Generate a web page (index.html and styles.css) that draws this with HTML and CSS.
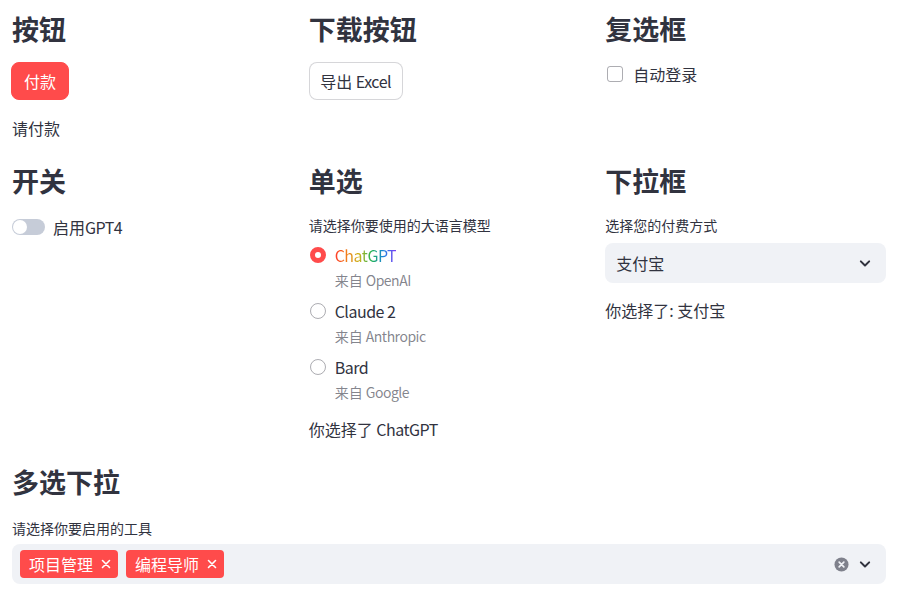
FILE: index.html
```html
<!DOCTYPE html>
<html lang="zh">
<head>
<meta charset="utf-8">
<link rel="stylesheet" href="styles.css">
</head>
<body>
<main class="page">
  <section class="cols row1">
    <div class="col">
      <h3 class="hd">按钮</h3>
      <button class="btn btn-primary">付款</button>
      <p class="txt after-btn">请付款</p>
    </div>
    <div class="col">
      <h3 class="hd">下载按钮</h3>
      <button class="btn btn-secondary">导出 <span class="en">Excel</span></button>
    </div>
    <div class="col">
      <h3 class="hd">复选框</h3>
      <label class="check"><span class="box"></span><span>自动登录</span></label>
    </div>
  </section>

  <section class="cols row2">
    <div class="col">
      <h3 class="hd">开关</h3>
      <label class="toggle"><span class="track"><span class="knob"></span></span><span>启用<span class="en">GPT4</span></span></label>
    </div>
    <div class="col">
      <h3 class="hd">单选</h3>
      <div class="label">请选择你要使用的大语言模型</div>
      <div class="radios">
        <div class="opt">
          <div class="opt-line"><span class="radio on"></span><span class="rainbow en">ChatGPT</span></div>
          <div class="caption">来自 <span class="en">OpenAI</span></div>
        </div>
        <div class="opt">
          <div class="opt-line"><span class="radio"></span><span class="en">Claude 2</span></div>
          <div class="caption">来自 <span class="en">Anthropic</span></div>
        </div>
        <div class="opt">
          <div class="opt-line"><span class="radio"></span><span class="en">Bard</span></div>
          <div class="caption">来自 <span class="en">Google</span></div>
        </div>
      </div>
      <p class="txt result">你选择了 <span class="en">ChatGPT</span></p>
    </div>
    <div class="col">
      <h3 class="hd">下拉框</h3>
      <div class="label">选择您的付费方式</div>
      <div class="select">
        <span>支付宝</span>
        <svg class="chev" viewBox="0 0 24 24" width="20" height="20"><path d="M7 10l5 5 5-5" fill="none" stroke="#31333F" stroke-width="2.4" stroke-linecap="round" stroke-linejoin="round"/></svg>
      </div>
      <p class="txt sel-result">你选择了: 支付宝</p>
    </div>
  </section>

  <section class="multi">
    <h3 class="hd">多选下拉</h3>
    <div class="label">请选择你要启用的工具</div>
    <div class="mselect">
      <div class="tags">
        <span class="tag">项目管理<svg class="x" viewBox="0 0 10 10" width="10" height="10"><path d="M1.5 1.5l7 7M8.5 1.5l-7 7" stroke="#fff" stroke-width="1.6" stroke-linecap="round"/></svg></span>
        <span class="tag">编程导师<svg class="x" viewBox="0 0 10 10" width="10" height="10"><path d="M1.5 1.5l7 7M8.5 1.5l-7 7" stroke="#fff" stroke-width="1.6" stroke-linecap="round"/></svg></span>
      </div>
      <div class="icons">
        <svg viewBox="0 0 16 16" width="15" height="15"><circle cx="8" cy="8" r="7.5" fill="#7f818c"/><path d="M5.5 5.5l5 5M10.5 5.5l-5 5" stroke="#f0f2f6" stroke-width="1.8" stroke-linecap="round"/></svg>
        <svg class="chev" viewBox="0 0 24 24" width="20" height="20"><path d="M7 10l5 5 5-5" fill="none" stroke="#31333F" stroke-width="2.4" stroke-linecap="round" stroke-linejoin="round"/></svg>
      </div>
    </div>
  </section>
</main>
</body>
</html>
```

FILE: styles.css
```css
* { box-sizing: border-box; }
html, body { margin: 0; padding: 0; background: #fff; }
body {
  font-family: "Noto Sans CJK SC", "Noto Sans", sans-serif;
  color: #31333F;
  font-size: 16px;
  line-height: 24px;
}
.page { padding: 0 16px 0 12px; }
.en { letter-spacing: -0.5px; }
.cols {
  display: grid;
  grid-template-columns: repeat(3, 1fr);
  column-gap: 16px;
}
.col { display: flex; flex-direction: column; align-items: flex-start; }
.hd {
  margin: 0;
  font-size: 27px;
  line-height: 34px;
  font-weight: 700;
}
.row1 { padding-top: 12px; }
.row1 .hd { margin-bottom: 16px; }
.txt { margin: 0; }
.after-btn { margin-top: 16px; }

.btn {
  font-family: inherit;
  font-size: 16px;
  line-height: 24px;
  height: 38px;
  border-radius: 8px;
  padding: 0;
  white-space: nowrap;
  cursor: pointer;
}
.btn-primary {
  background: #FF4B4B;
  color: #fff;
  border: 1px solid #FF4B4B;
  width: 58px;
  margin-left: -1px;
}
.btn-secondary {
  background: #fff;
  color: #31333F;
  border: 1px solid rgba(49, 51, 63, 0.2);
  width: 94px;
}

.check { display: flex; align-items: center; gap: 10px; height: 24px; }
.box {
  width: 16px; height: 16px;
  border: 1px solid rgba(49, 51, 63, 0.4);
  border-radius: 3px;
  margin-left: 2px;
}

.row2 { margin-top: 24px; }
.row2 .hd { margin-bottom: 17px; }

.toggle { display: flex; align-items: center; gap: 8px; height: 24px; }
.track {
  width: 33px; height: 16px;
  background: #c6ccd8;
  border-radius: 8px;
  position: relative;
  display: block;
}
.knob {
  position: absolute; left: 1px; top: 1px;
  width: 14px; height: 14px;
  border-radius: 50%;
  background: #fff;
}

.label { font-size: 14px; line-height: 20px; height: 20px; }
.radios { margin-top: 8px; display: flex; flex-direction: column; gap: 9px; }
.opt-line { display: flex; align-items: center; gap: 9px; height: 24px; }
.radio {
  width: 16px; height: 16px;
  border-radius: 50%;
  border: 1px solid rgba(49, 51, 63, 0.4);
  margin-left: 1px;
}
.radio.on {
  border: 5px solid #FF4B4B;
  background: #fff;
}
.rainbow {
  background-image: linear-gradient(to right, #ff3b2b, #f0801a, #c9b41c, #21b354, #1c83e1, #803df5);
  -webkit-background-clip: text;
  background-clip: text;
  color: transparent;
}
.caption {
  font-size: 14px; line-height: 20px;
  color: rgba(49, 51, 63, 0.6);
  margin: 3px 0 0 26px;
}
.result { margin-top: 15px; }

.select {
  margin-top: 8px;
  width: 100%;
  height: 40px;
  background: #F0F2F6;
  border-radius: 8px;
  display: flex;
  align-items: center;
  justify-content: space-between;
  padding: 0 11px 0 11px;
}
.sel-result { margin-top: 15px; }
.chev { display: block; }

.multi { margin-top: 24px; }
.multi .hd { margin-bottom: 19px; }
.mselect {
  margin-top: 6px;
  width: 100%;
  height: 40px;
  background: #F0F2F6;
  border-radius: 8px;
  display: flex;
  align-items: center;
  justify-content: space-between;
  padding: 0 11px 0 8px;
}
.tags { display: flex; gap: 8px; }
.tag {
  background: #FF4B4B;
  color: #fff;
  height: 28px;
  border-radius: 4px;
  display: inline-flex;
  align-items: center;
  padding: 0 7px 0 9px;
  font-size: 16px;
}
.x { margin-left: 8px; display: block; }
.icons { display: flex; align-items: center; gap: 6px; }
```
